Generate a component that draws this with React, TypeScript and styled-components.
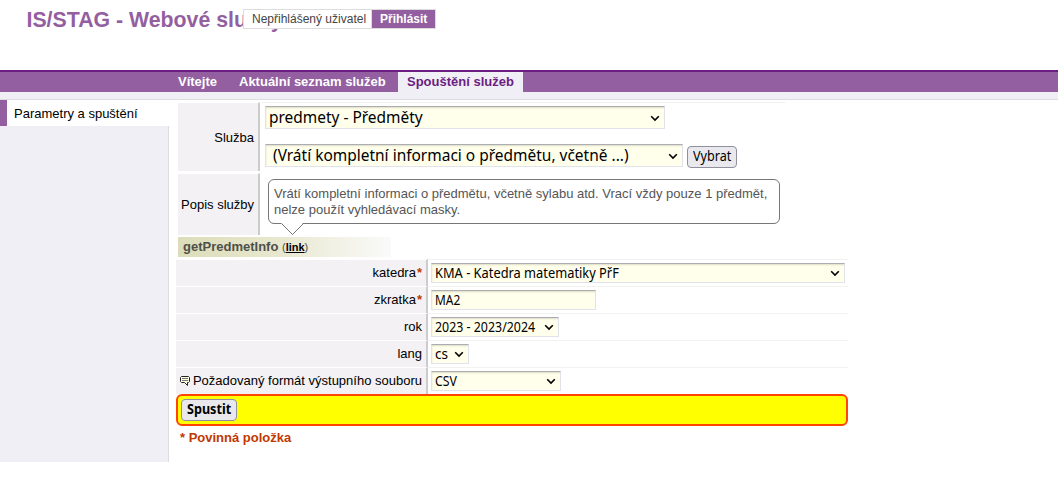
import React from 'react';
import styled, { createGlobalStyle } from 'styled-components';

const GlobalStyle = createGlobalStyle`
  *, *::before, *::after { box-sizing: border-box; }
  body {
    margin: 0;
    background: #fff;
    color: #000;
    font: 13px/16px "Liberation Sans", Arial, sans-serif;
  }
`;

const Header = styled.header`
  position: relative;
  height: 70px;
  padding: 7px 0 0 26.5px;
`;

const Title = styled.h1`
  margin: 0;
  color: #935fa1;
  font-size: 21.3px;
  line-height: 26px;
  white-space: nowrap;
`;

const UserBox = styled.div`
  position: absolute;
  left: 243px;
  top: 9px;
  display: flex;
  width: 193px;
  height: 20px;
  border: 1px solid #ddd;
  background: #fff;
  font-size: 12px;
  line-height: 18px;
  white-space: nowrap;
`;

const UserName = styled.span`
  width: 128px;
  padding-left: 8px;
  border-right: 1px solid #ddd;
  color: #444;
`;

const Login = styled.a`
  flex: 1;
  padding-left: 8px;
  background: #935fa1;
  color: #fff;
  font-weight: bold;
`;

const Nav = styled.nav`
  display: flex;
  height: 22px;
  padding-left: 169px;
  border-top: 2px solid #6b1e82;
  background: #935fa1;
`;

const Tab = styled.a<{ $width: number; $active?: boolean }>`
  width: ${p => p.$width}px;
  padding: 2px 0 0 9px;
  background: ${p => (p.$active ? '#f0eff5' : 'transparent')};
  color: ${p => (p.$active ? '#6b1e82' : '#fff')};
  font-weight: bold;
  white-space: nowrap;
`;

const SubBar = styled.div`
  height: 8px;
  border-bottom: 1px solid #ddd;
  background: #f0eff5;
`;

const Body = styled.div`
  display: flex;
  height: 362px;
`;

const Sidebar = styled.aside`
  display: flex;
  flex-direction: column;
  width: 169px;
`;

const SideItem = styled.a`
  height: 26px;
  padding: 6px 0 0 7px;
  border-left: 7px solid #935fa1;
`;

const SideFill = styled.div`
  flex: 1;
  border-right: 1px solid #ddd;
  background: #f0eff5;
`;

const Main = styled.main`
  width: 679px;
  padding: 2px 0 0 7px;
`;

const ServiceTable = styled.section`
  display: flex;
  flex-direction: column;
  gap: 2px;
  width: 610px;
  padding-left: 2px;
`;

const ServiceRow = styled.div<{ $height: number }>`
  display: flex;
  gap: 2px;
  height: ${p => p.$height}px;
`;

const Label = styled.div<{ $width: number; $lift?: boolean }>`
  display: flex;
  align-items: center;
  justify-content: flex-end;
  flex: none;
  width: ${p => p.$width}px;
  padding: ${p => (p.$lift ? '0 4px 1px 0' : '1px 4px 0 0')};
  border-top: 1px solid #fff;
  border-right: 2px solid #ccc;
  background: #f3f1f3;
  white-space: nowrap;
`;

const ServiceCell = styled.div<{ $line?: boolean }>`
  display: flex;
  flex: 1;
  flex-direction: column;
  gap: 15px;
  padding: 3px 0 0 3px;
  border-top: 1px solid ${p => (p.$line ? '#f2f2f2' : '#fff')};
`;

const PickLine = styled.div`
  display: flex;
  gap: 4px;
`;

const Field = styled.div<{ $width: number; $large?: boolean }>`
  display: flex;
  align-items: center;
  justify-content: space-between;
  flex: none;
  width: ${p => p.$width}px;
  height: ${p => (p.$large ? 23 : 20)}px;
  padding: ${p => (p.$large ? '0 4px 1px 3px' : '0 4px 1px 3px')};
  border: 1px solid #e0e3eb;
  border-top-color: #abadb3;
  background: #ffffec;
  box-shadow: inset 1px 2px 2px -1px #dddcc4;
  font-family: "Noto Sans", sans-serif;
  font-size: ${p => (p.$large ? 16 : 14)}px;
  line-height: 17px;
`;

const Narrow = styled.span<{ $scale: number }>`
  display: inline-block;
  transform: scaleX(${p => p.$scale});
  transform-origin: 0 50%;
  white-space: pre;
  width: 0;
`;

const Button = styled.button<{ $width: number; $bold?: boolean; $drop?: boolean }>`
  width: ${p => p.$width}px;
  height: 22px;
  margin-top: ${p => (p.$drop ? 2 : 0)}px;
  padding: 0 0 2px 5px;
  border: 1px solid #8f8f9d;
  border-radius: 4px;
  background: #e9e9ed;
  color: #000;
  font: ${p => (p.$bold ? 'bold' : 'normal')} 14px/18px "Noto Sans", sans-serif;
  text-align: left;
`;

const Bubble = styled.div`
  position: relative;
  width: 512px;
  height: 45px;
  margin: 2px 0 0 3px;
  padding: 6px 5px;
  border: 1px solid #777;
  border-radius: 6px;
  color: #555;
`;

const Pointer = styled.svg`
  position: absolute;
  left: 11px;
  top: 43px;
`;

const Method = styled.h2`
  width: 213px;
  height: 20px;
  margin: 2px 0 2px 2px;
  padding: 2px 0 0 5px;
  background: linear-gradient(to right, #dcddb8, #e7e7ce 45%, #fafafa);
  color: #4f4f4a;
  font-size: 13px;
  small { font-size: 11px; font-weight: normal; }
  a { color: #000; font-weight: bold; text-decoration: underline; }
`;

const ParamRow = styled.div`
  display: flex;
  height: 27px;
  width: 672px;
`;

const ParamCell = styled.div`
  flex: 1;
  padding: 3px 0 0 3px;
  border-top: 1px solid #f2f2f2;
`;

const Star = styled.b`
  margin-left: 1px;
  color: #bf3900;
`;

const Submit = styled.div`
  width: 672px;
  height: 32px;
  padding: 3px;
  border: 2px solid #ff4500;
  border-radius: 6px;
  background: #ff0;
`;

const Note = styled.p`
  margin: 4px 0 0 4px;
  color: #bf3900;
  font-weight: bold;
`;

const NoteIcon = styled.svg`
  margin-right: 3px;
`;

const Arrow = styled.svg`
  position: relative;
  top: 0.5px;
`;

const Chevron = () => (
  <Arrow width="10" height="8" viewBox="0 0 10 8" fill="none">
    <path d="M1.2 2.2 5 6 8.8 2.2" stroke="#000" strokeWidth="1.6" />
  </Arrow>
);

type ControlProps = { width: number; scale: number; text: string; large?: boolean; plain?: boolean };

const Control = ({ width, scale, text, large, plain }: ControlProps) => (
  <Field $width={width} $large={large}>
    <Narrow $scale={scale}>{text}</Narrow>
    {!plain && <Chevron />}
  </Field>
);

const params: (ControlProps & { label: string; required?: boolean; icon?: boolean })[] = [
  { label: 'katedra', required: true, width: 414, scale: 0.917, text: 'KMA - Katedra matematiky PřF' },
  { label: 'zkratka', required: true, width: 165, scale: 0.85, text: 'MA2', plain: true },
  { label: 'rok', width: 128, scale: 0.885, text: '2023 - 2023/2024' },
  { label: 'lang', width: 38, scale: 0.97, text: 'cs' },
  { label: 'Požadovaný formát výstupního souboru', icon: true, width: 130, scale: 0.88, text: 'CSV' },
];

export default function App() {
  return (
    <>
      <GlobalStyle />
      <Header>
        <Title>IS/STAG - Webové služby</Title>
        <UserBox>
          <UserName>Nepřihlášený uživatel</UserName>
          <Login>Přihlásit</Login>
        </UserBox>
      </Header>
      <Nav>
        <Tab $width={61}>Vítejte</Tab>
        <Tab $width={168}>Aktuální seznam služeb</Tab>
        <Tab $width={125} $active>Spouštění služeb</Tab>
      </Nav>
      <SubBar />
      <Body>
        <Sidebar>
          <SideItem>Parametry a spuštění</SideItem>
          <SideFill />
        </Sidebar>
        <Main>
          <ServiceTable>
            <ServiceRow $height={69}>
              <Label $width={82}>Služba</Label>
              <ServiceCell $line>
                <Control large width={400} scale={0.966} text="predmety - Předměty" />
                <PickLine>
                  <Control large width={418} scale={0.967} text=" (Vrátí kompletní informaci o předmětu, včetně ...)" />
                  <Button $width={50} $drop><Narrow $scale={0.9}>Vybrat</Narrow></Button>
                </PickLine>
              </ServiceCell>
            </ServiceRow>
            <ServiceRow $height={62}>
              <Label $width={82}>Popis služby</Label>
              <ServiceCell>
                <Bubble>
                  Vrátí kompletní informaci o předmětu, včetně sylabu atd. Vrací vždy pouze 1 předmět, nelze použít vyhledávací masky.
                  <Pointer width="24" height="13" viewBox="0 0 24 13">
                    <path d="M1 0h22L12.5 11.5Z" fill="#fff" />
                    <path d="M1.5.5 12.5 11.5 23.5.5" fill="none" stroke="#777" />
                  </Pointer>
                </Bubble>
              </ServiceCell>
            </ServiceRow>
          </ServiceTable>
          <Method>getPredmetInfo <small>(<a>link</a>)</small></Method>
          {params.map(p => (
            <ParamRow key={p.label}>
              <Label $width={252} $lift>
                {p.icon && (
                  <NoteIcon width="10" height="10" viewBox="0 0 10 10">
                    <path d="M1.5.5h7l1 1v4l-1 1h-1v3l-3-3h-3l-1-1v-4Z" fill="#ffffe1" stroke="#222" />
                    <path d="M2 2.5h6M2 4.5h6" stroke="#777" />
                  </NoteIcon>
                )}
                {p.label}
                {p.required && <Star>*</Star>}
              </Label>
              <ParamCell><Control {...p} /></ParamCell>
            </ParamRow>
          ))}
          <Submit>
            <Button $width={56} $bold><Narrow $scale={0.9}>Spustit</Narrow></Button>
          </Submit>
          <Note>* Povinná položka</Note>
        </Main>
      </Body>
    </>
  );
}
